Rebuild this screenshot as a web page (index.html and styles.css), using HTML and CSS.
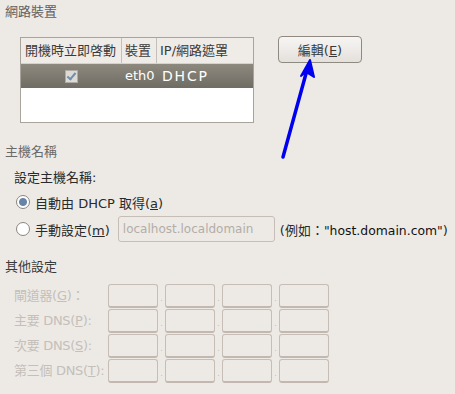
FILE: index.html
```html
<!DOCTYPE html>
<html lang="zh-Hant">
<head>
  <meta charset="UTF-8" />
  <title>網路裝置</title>
  <link rel="stylesheet" href="styles.css">
</head>
<body>
  <div class="page">
    <!-- 網路裝置 -->
    <div class="section-title title-net">網路裝置</div>
    <div class="device-row">
      <div class="device-list">
        <div class="list-head">
          <div class="col col-boot">開機時立即啓動</div>
          <div class="col col-dev">裝置</div>
          <div class="col col-ip">IP/網路遮罩</div>
        </div>
        <div class="list-item">
          <div class="col col-boot"><span class="check"></span></div>
          <div class="col col-dev">eth0</div>
          <div class="col col-ip">DHCP</div>
        </div>
      </div>
      <button class="edit-btn">編輯(<u>E</u>)</button>
    </div>

    <!-- 主機名稱 -->
    <div class="section-title title-host">主機名稱</div>
    <div class="host-label">設定主機名稱:</div>
    <div class="radio-row first">
      <span class="radio checked"></span>
      <span>自動由 DHCP 取得(<u>a</u>)</span>
    </div>
    <div class="radio-row second">
      <span class="radio"></span>
      <span>手動設定(<u>m</u>)</span>
      <input class="host-input" type="text" placeholder="localhost.localdomain" disabled />
      <span class="example">(例如：<span class="latin">"host.domain.com"</span>)</span>
    </div>

    <!-- 其他設定 -->
    <div class="section-title title-other">其他設定</div>
    <div class="ip-grid">
      <div class="ip-label">閘道器(<u>G</u>)：</div>
      <div class="ip-fields"><span class="ip-box"></span><i>.</i><span class="ip-box"></span><i>.</i><span class="ip-box"></span><i>.</i><span class="ip-box"></span></div>
      <div class="ip-label">主要 DNS(<u>P</u>):</div>
      <div class="ip-fields"><span class="ip-box"></span><i>.</i><span class="ip-box"></span><i>.</i><span class="ip-box"></span><i>.</i><span class="ip-box"></span></div>
      <div class="ip-label">次要 DNS(<u>S</u>):</div>
      <div class="ip-fields"><span class="ip-box"></span><i>.</i><span class="ip-box"></span><i>.</i><span class="ip-box"></span><i>.</i><span class="ip-box"></span></div>
      <div class="ip-label">第三個 DNS(<u>T</u>):</div>
      <div class="ip-fields"><span class="ip-box"></span><i>.</i><span class="ip-box"></span><i>.</i><span class="ip-box"></span><i>.</i><span class="ip-box"></span></div>
    </div>

    <!-- annotation arrow -->
    <svg class="arrow" width="455" height="394" viewBox="0 0 455 394">
      <line x1="283" y1="157" x2="307" y2="70" stroke="#0000f0" stroke-width="3.5" stroke-linecap="round" />
      <polygon points="310,60 301,76 306,72 314,77" fill="#0000f0" stroke="#0000f0" stroke-width="2" stroke-linejoin="round" />
    </svg>
  </div>
</body>
</html>
```

FILE: styles.css
```css
/* ---------- base ---------- */
body {
  margin: 0;
  background: #edeae6;
  font-family: "DejaVu Sans", "Noto Sans CJK TC", sans-serif;
  font-size: 13px;
  color: #2a2a2a;
}
.page {
  position: relative;
  width: 455px;
  height: 394px;
  overflow: hidden;
}
u {
  text-decoration: underline;
}

.section-title {
  padding-left: 5px;
  height: 20px;
  line-height: 20px;
}
.title-net {
  padding-top: 2px;
  color: #606060;
}
.title-host {
  margin-top: 19px;
  color: #6a6a6a;
}
.title-other {
  margin-top: 14px;
  color: #3a3a3a;
}

/* ---------- device list ---------- */
.device-row {
  display: flex;
  align-items: flex-start;
  margin-top: 15px;
  padding-left: 20px;
}
.device-list {
  width: 232px;
  height: 84px;
  border: 1px solid #a8a39b;
  background: #fff;
}
.list-head {
  display: flex;
  height: 25px;
  background: #efebe7;
  border-bottom: 1px solid #d6d1cb;
}
.list-head .col {
  border-right: 1px solid #c4bfb8;
  color: #3a3a3a;
}
.list-head .col-ip {
  border-right: none;
}
.col {
  box-sizing: border-box;
  line-height: 25px;
  padding-left: 4px;
  white-space: nowrap;
}
.col-boot {
  width: 101px;
}
.col-dev {
  width: 35px;
  padding-left: 3px;
}
.col-ip {
  flex: 1;
  padding-left: 3px;
}
.list-item {
  display: flex;
  height: 24px;
  background: linear-gradient(#8d897f, #6f6c63);
  color: #fff;
}
.list-item .col {
  line-height: 24px;
}
.list-item .col-dev {
  padding-left: 3px;
}
.list-item .col-ip {
  padding-left: 5px;
  font-size: 14px;
  letter-spacing: 1.8px;
}
.list-item .col-boot {
  display: flex;
  justify-content: center;
  align-items: center;
  padding-left: 0;
}
.check {
  position: relative;
  width: 11px;
  height: 11px;
  border: 1px solid #b0aca5;
  background: #dedad5;
}
.check::after {
  content: "";
  position: absolute;
  left: 3px;
  top: 0;
  width: 3px;
  height: 7px;
  border: solid #6f8fae;
  border-width: 0 2px 2px 0;
  transform: rotate(40deg);
}

.edit-btn {
  margin-left: 24px;
  margin-top: -1px;
  width: 84px;
  height: 27px;
  border: 1px solid #8e8981;
  border-radius: 4px;
  background: linear-gradient(#f7f5f3, #e4e0dc);
  font-family: "DejaVu Sans", "Noto Sans CJK TC", sans-serif;
  font-size: 13px;
  color: #3a3a3a;
  padding: 0;
}

/* ---------- hostname ---------- */
.host-label {
  margin-top: 6px;
  padding-left: 14px;
  line-height: 20px;
}
.radio-row {
  display: flex;
  align-items: center;
  padding-left: 16px;
  white-space: nowrap;
}
.radio-row.first {
  margin-top: 2px;
  height: 24px;
}
.radio-row.second {
  margin-top: 1px;
  height: 28px;
}
.radio {
  box-sizing: border-box;
  width: 14px;
  height: 14px;
  margin-right: 5px;
  border: 1px solid #8a867f;
  border-radius: 50%;
  background: #fff;
}
.radio.checked {
  background: radial-gradient(circle, #6683a8 0 3.5px, #fff 4.5px);
}
.host-input {
  box-sizing: border-box;
  width: 157px;
  height: 26px;
  margin-left: 8px;
  padding: 0 4px;
  border: 1px solid #c6bdb6;
  border-radius: 3px;
  background: #edeae6;
  font-family: "DejaVu Sans", sans-serif;
  font-size: 12px;
}
.host-input::placeholder {
  color: #b3ada7;
}
.example {
  margin-left: 5px;
}
.latin {
  font-size: 12.4px;
  color: #111;
}

/* ---------- other settings ---------- */
.ip-grid {
  display: grid;
  grid-template-columns: 94px auto;
  row-gap: 1px;
  margin-top: 7px;
  padding-left: 14px;
}
.ip-label {
  line-height: 24px;
  color: #c4bfb9;
  white-space: nowrap;
  letter-spacing: -0.3px;
}
.ip-fields {
  display: flex;
  align-items: center;
}
.ip-box {
  box-sizing: border-box;
  width: 50px;
  height: 24px;
  border: 1px solid #c6bdb6;
  border-bottom: 2px solid #c3b8b0;
  border-radius: 3px;
}
.ip-fields i {
  width: 7px;
  text-align: center;
  font-style: normal;
  font-size: 8px;
  color: #c4bfb9;
  padding-top: 4px;
}

/* ---------- annotation ---------- */
.arrow {
  position: absolute;
  left: 0;
  top: 0;
  pointer-events: none;
}
```
